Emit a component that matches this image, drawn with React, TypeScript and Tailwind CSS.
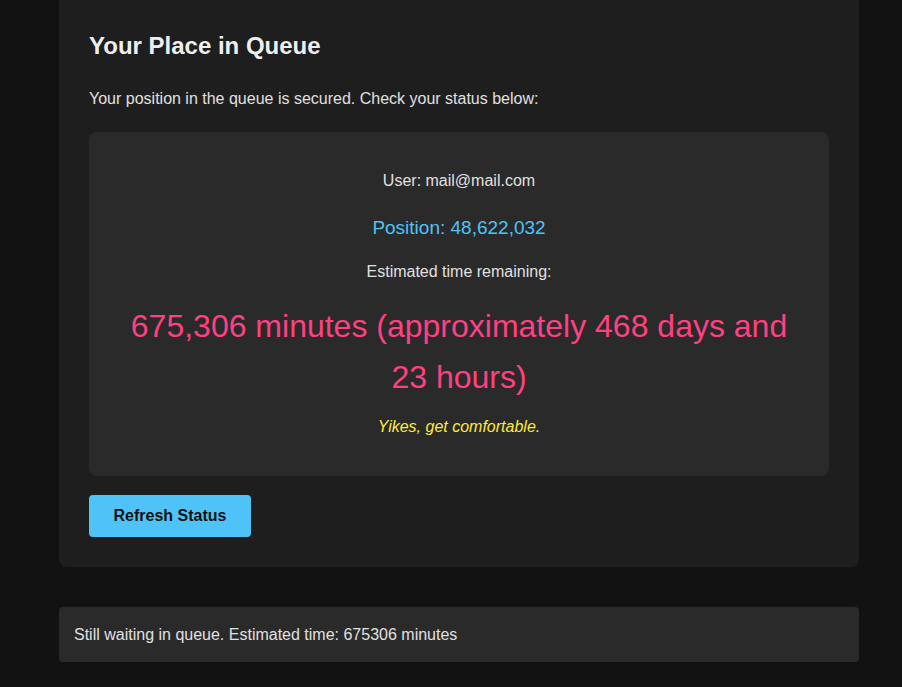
const App = () => {
  return (
    <div className="min-h-screen bg-[#121212] pb-[25px] font-['Liberation_Sans',Arial,sans-serif] text-[#e0e0e0]">
      <div className="ml-[59px] w-[800px]">
        <section className="-mt-[20px] rounded-lg bg-[#1e1e1e] px-[30px] pb-[30px] pt-[48px]">
          <h2 className="text-[24px] font-bold leading-[36px] text-[#eeeeee]">Your Place in Queue</h2>
          <p className="mt-[23px] text-[16px] leading-[24px]">
            Your position in the queue is secured. Check your status below:
          </p>
          <div className="mt-[21px] rounded-lg bg-[#2a2a2a] px-[30px] pb-[37px] pt-[37px] text-center">
            <p className="text-[16px] leading-[24px]">User: mail@mail.com</p>
            <p className="mt-[21px] text-[19px] leading-[28px] text-[#4fc3f7]">Position: 48,622,032</p>
            <p className="mt-[18px] text-[16px] leading-[24px]">Estimated time remaining:</p>
            <p className="mt-[17px] text-[32px] leading-[51px] text-[#ff4081]">
              675,306 minutes (approximately 468 days and 23 hours)
            </p>
            <p className="mt-[12px] text-[16px] italic leading-[24px] text-[#ffeb3b]">Yikes, get comfortable.</p>
          </div>
          <button className="mt-[19px] h-[42px] w-[162px] rounded-[4px] bg-[#4fc3f7] text-[16px] font-bold text-[#121212]">
            Refresh Status
          </button>
        </section>
        <div className="mt-[40px] rounded-[4px] bg-[#2a2a2a] px-[15px] py-[15px] text-[16px] leading-[25px]">
          Still waiting in queue. Estimated time: 675306 minutes
        </div>
      </div>
    </div>
  );
};

export default App;
